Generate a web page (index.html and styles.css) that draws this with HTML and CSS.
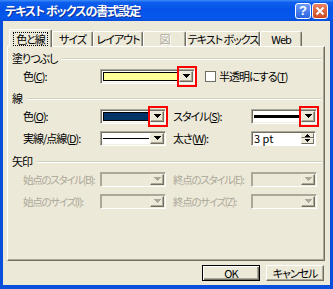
FILE: index.html
```html
<!DOCTYPE html>
<html lang="ja">
    <head>
        <meta charset="UTF-8" />
        <title>テキスト ボックスの書式設定</title>
        <link rel="stylesheet" href="styles.css">
    </head>

    <body>
        <div class="window">
            <div class="titlebar">
                <span class="title">テキスト ボックスの書式設定</span>
                <span class="cap-btn help">?</span>
                <span class="cap-btn close">
                    <svg width="10" height="10" viewBox="0 0 10 10"><path d="M1.5 1.5l7 7M8.5 1.5l-7 7" stroke="#fff" stroke-width="2"/></svg>
                </span>
            </div>

            <div class="client">
                <div class="tabs">
                    <div class="tab active t-line"><span class="focus">色と線</span></div>
                    <div class="tab t-size">サイズ</div>
                    <div class="tab t-layout">レイアウト</div>
                    <div class="tab t-pic disabled">図</div>
                    <div class="tab t-box">テキスト ボックス</div>
                    <div class="tab t-web">Web</div>
                </div>

                <div class="panel">
                    <!-- 塗りつぶし -->
                    <div class="group">
                        <div class="group-head"><span>塗りつぶし</span><i class="rule"></i></div>
                        <div class="row">
                            <span class="lbl">色(<u>C</u>):</span>
                            <div class="combo wide">
                                <div class="field"><span class="swatch yellow"></span></div>
                                <span class="dd"><svg width="7" height="4"><path d="M0 0h7v1h-1v1h-1v1h-1v1h-1v-1h-1v-1h-1v-1h-1z"/></svg></span>
                                <span class="mark"></span>
                            </div>
                            <span class="check"></span>
                            <span class="check-lbl">半透明にする(<u>T</u>)</span>
                        </div>
                    </div>

                    <!-- 線 -->
                    <div class="group">
                        <div class="group-head"><span>線</span><i class="rule"></i></div>
                        <div class="row">
                            <span class="lbl">色(<u>O</u>):</span>
                            <div class="combo">
                                <div class="field"><span class="swatch navy"></span></div>
                                <span class="dd"><svg width="7" height="4"><path d="M0 0h7v1h-1v1h-1v1h-1v1h-1v-1h-1v-1h-1v-1h-1z"/></svg></span>
                                <span class="mark"></span>
                            </div>
                            <span class="lbl lbl2">スタイル(<u>S</u>):</span>
                            <div class="combo">
                                <div class="field"><span class="stroke thick"></span></div>
                                <span class="dd"><svg width="7" height="4"><path d="M0 0h7v1h-1v1h-1v1h-1v1h-1v-1h-1v-1h-1v-1h-1z"/></svg></span>
                                <span class="mark"></span>
                            </div>
                        </div>
                        <div class="row">
                            <span class="lbl">実線/点線(<u>D</u>):</span>
                            <div class="combo">
                                <div class="field"><span class="stroke"></span></div>
                                <span class="dd"><svg width="7" height="4"><path d="M0 0h7v1h-1v1h-1v1h-1v1h-1v-1h-1v-1h-1v-1h-1z"/></svg></span>
                            </div>
                            <span class="lbl lbl2">太さ(<u>W</u>):</span>
                            <div class="spin">
                                <div class="spin-val">3 pt</div>
                                <div class="spin-btns">
                                    <span class="sb"><svg width="5" height="3"><path d="M2 0h1v1h1v1h1v1h-5v-1h1v-1h1z"/></svg></span>
                                    <span class="sb"><svg width="5" height="3"><path d="M0 0h5v1h-1v1h-1v1h-1v-1h-1v-1h-1z"/></svg></span>
                                </div>
                            </div>
                        </div>
                    </div>

                    <!-- 矢印 -->
                    <div class="group arrows">
                        <div class="group-head"><span>矢印</span><i class="rule"></i></div>
                        <div class="row off">
                            <span class="lbl">始点のスタイル(B):</span>
                            <div class="combo">
                                <div class="field"></div>
                                <span class="dd"><svg width="7" height="4"><path d="M0 0h7v1h-1v1h-1v1h-1v1h-1v-1h-1v-1h-1v-1h-1z"/></svg></span>
                            </div>
                            <span class="lbl lbl2">終点のスタイル(E):</span>
                            <div class="combo">
                                <div class="field"></div>
                                <span class="dd"><svg width="7" height="4"><path d="M0 0h7v1h-1v1h-1v1h-1v1h-1v-1h-1v-1h-1v-1h-1z"/></svg></span>
                            </div>
                        </div>
                        <div class="row off">
                            <span class="lbl">始点のサイズ(I):</span>
                            <div class="combo">
                                <div class="field"></div>
                                <span class="dd"><svg width="7" height="4"><path d="M0 0h7v1h-1v1h-1v1h-1v1h-1v-1h-1v-1h-1v-1h-1z"/></svg></span>
                            </div>
                            <span class="lbl lbl2">終点のサイズ(Z):</span>
                            <div class="combo">
                                <div class="field"></div>
                                <span class="dd"><svg width="7" height="4"><path d="M0 0h7v1h-1v1h-1v1h-1v1h-1v-1h-1v-1h-1v-1h-1z"/></svg></span>
                            </div>
                        </div>
                    </div>
                </div>

                <div class="buttons">
                    <button class="btn default">OK</button>
                    <button class="btn">キャンセル</button>
                </div>
            </div>
        </div>
    </body>
</html>
```

FILE: styles.css
```css
body {
    margin: 0;
    font-family: "Noto Sans CJK JP", "Liberation Sans", sans-serif;
    font-size: 11px;
    letter-spacing: -1px;
    font-feature-settings: "palt";
    color: #000;
}

.window {
    width: 333px;
    height: 289px;
    box-sizing: border-box;
    display: flex;
    flex-direction: column;
    background: #0A4FDB;
    padding: 0 3px 4px;
}

/* title bar */
.titlebar {
    height: 21px;
    margin: 0 -3px;
    padding: 0 5px 0 5px;
    display: flex;
    align-items: center;
    gap: 1px;
    background: linear-gradient(to bottom, #3D8BF7 0%, #0D5EEE 12%, #0453E6 45%, #0658EE 85%, #0A4CD5 100%);
}

.title {
    flex: 1;
    color: #fff;
    font-weight: bold;
    font-size: 12px;
    letter-spacing: -1px;
    line-height: 21px;
    text-shadow: 1px 1px #0B2F9C;
}

.cap-btn {
    width: 16px;
    height: 16px;
    box-sizing: border-box;
    border: 1px solid #fff;
    border-radius: 3px;
    display: flex;
    align-items: center;
    justify-content: center;
    color: #fff;
    font-family: "Liberation Sans", sans-serif;
    font-weight: bold;
    font-size: 13px;
    letter-spacing: 0;
}

.help {
    background: linear-gradient(to bottom, #6C9BF8, #2A62E0);
}

.close {
    background: linear-gradient(to bottom, #E98261, #CF4A20);
}

/* client area */
.client {
    flex: 1;
    background: #ECE9D8;
    padding: 8px 5px 0 4px;
    display: flex;
    flex-direction: column;
}

.tabs {
    height: 17px;
    display: flex;
    align-items: flex-end;
    padding-left: 2px;
}

.tab {
    height: 15px;
    box-sizing: border-box;
    border: 1px solid #fff;
    border-right-color: #716F64;
    border-bottom: none;
    border-radius: 2px 2px 0 0;
    box-shadow: inset -1px 0 #ACA899;
    display: flex;
    align-items: center;
    justify-content: center;
    line-height: 12px;
    white-space: nowrap;
}

.tab.active {
    height: 18px;
    margin-bottom: -1px;
    position: relative;
    z-index: 1;
    background: #ECE9D8;
}

.focus {
    border: 1px dotted #000;
    padding: 0 2px;
}

.tab.disabled {
    color: #ACA899;
    text-shadow: 1px 1px #fff;
}

.t-line { width: 43px; }
.t-size { width: 41px; }
.t-layout { width: 50px; }
.t-pic { width: 43px; }
.t-box { width: 74px; }
.t-web { width: 42px; }

.panel {
    height: 215px;
    box-sizing: border-box;
    border: 1px solid #fff;
    border-right-color: #716F64;
    border-bottom-color: #716F64;
    box-shadow: inset -1px -1px #ACA899;
    padding: 4px 2px 0 4px;
}

.group + .group {
    margin-top: 4px;
}

.group.arrows {
    margin-top: 5px;
}

.group-head {
    height: 14px;
    display: flex;
    align-items: center;
    gap: 5px;
}

.rule {
    flex: 1;
    height: 0;
    margin-top: 2px;
    border-top: 1px solid #D0D0BF;
    border-bottom: 1px solid #fff;
}

.row {
    height: 22px;
    display: flex;
    align-items: center;
    padding-left: 11px;
}

.lbl {
    width: 77px;
    white-space: nowrap;
}

.lbl2 {
    width: 78px;
    margin-left: 7px;
}

/* combo box */
.combo {
    position: relative;
    width: 66px;
    height: 15px;
    box-sizing: border-box;
    display: flex;
    background: #fff;
    border: 1px solid;
    border-color: #ACA899 #fff #fff #ACA899;
    box-shadow: inset 1px 1px #716F64, inset -1px -1px #F1EFE2;
    padding: 1px;
}

.combo.wide {
    width: 95px;
}

.field {
    flex: 1;
    display: flex;
    align-items: center;
    padding: 1px;
}

.swatch {
    flex: 1;
    height: 100%;
    box-sizing: border-box;
    border: 1px solid #000;
}

.yellow { background: #FFFF99; }
.navy { background: #003366; }

.stroke {
    flex: 1;
    height: 1px;
    background: #000;
}

.stroke.thick {
    height: 3px;
}

.dd {
    width: 14px;
    box-sizing: border-box;
    background: #ECE9D8;
    border: 1px solid;
    border-color: #F1EFE2 #716F64 #716F64 #F1EFE2;
    box-shadow: inset -1px -1px #ACA899;
    display: flex;
    align-items: center;
    justify-content: center;
}

.mark {
    position: absolute;
    top: -4px;
    bottom: -4px;
    right: -3px;
    width: 20px;
    border: 2px solid #F00;
    box-sizing: border-box;
}

.check {
    width: 11px;
    height: 11px;
    box-sizing: border-box;
    margin-left: 10px;
    background: #fff;
    border: 1px solid #716F64;
}

.check-lbl {
    margin-left: 3px;
    white-space: nowrap;
}

/* spinner */
.spin {
    width: 65px;
    height: 15px;
    box-sizing: border-box;
    display: flex;
    background: #fff;
    border: 1px solid;
    border-color: #ACA899 #fff #fff #ACA899;
    box-shadow: inset 1px 1px #716F64;
    padding: 1px;
}

.spin-val {
    flex: 1;
    line-height: 11px;
    padding-left: 1px;
    letter-spacing: 0;
}

.spin-btns {
    width: 13px;
    display: flex;
    flex-direction: column;
}

.sb {
    flex: 1;
    box-sizing: border-box;
    background: #ECE9D8;
    border: 1px solid;
    border-color: #F1EFE2 #716F64 #716F64 #F1EFE2;
    display: flex;
    align-items: center;
    justify-content: center;
}

.sb svg {
    display: block;
}

/* disabled rows */
.off .lbl {
    color: #ACA899;
    font-size: 10.5px;
    letter-spacing: -1.3px;
}

.off .combo {
    background: #ECE9D8;
    border-color: #ACA899 #fff #fff #ACA899;
    box-shadow: inset 1px 1px #ACA899;
}

.off .dd svg {
    fill: #ACA899;
}

/* dialog buttons */
.buttons {
    margin-top: 4px;
    display: flex;
    justify-content: flex-end;
    gap: 6px;
    padding-right: 1px;
}

.btn {
    width: 58px;
    height: 16px;
    padding: 0;
    font: inherit;
    letter-spacing: inherit;
    line-height: 12px;
    background: #ECE9D8;
    border: 1px solid;
    border-color: #fff #716F64 #716F64 #fff;
    box-shadow: inset -1px -1px #ACA899;
}

.btn.default {
    border-color: #000;
    box-shadow: inset 1px 1px #fff, inset -1px -1px #716F64, inset -2px -2px #ACA899;
}
```
